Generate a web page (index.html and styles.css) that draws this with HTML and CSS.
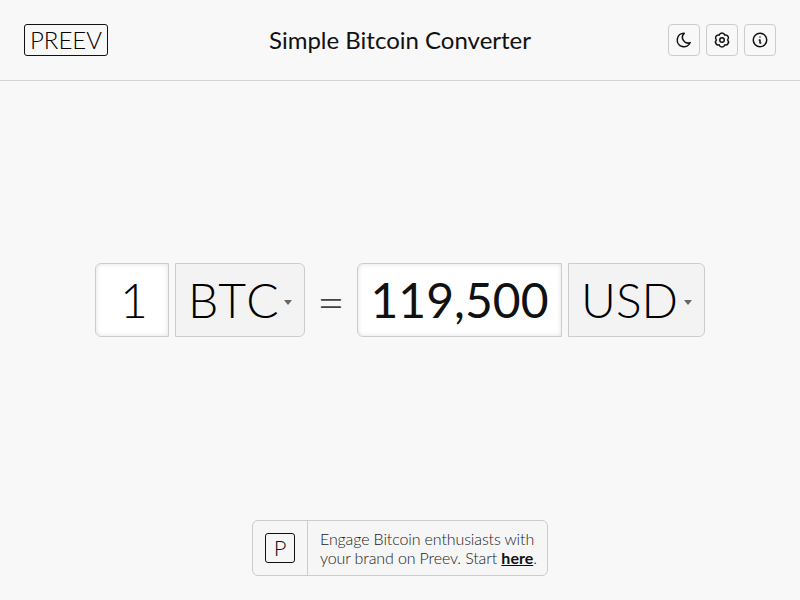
FILE: index.html
```html
<!DOCTYPE html>
<html lang="en">
<head>
    <meta charset="UTF-8">
    <meta name="viewport" content="width=device-width, initial-scale=1.0">
    <title>Simple Bitcoin Converter</title>
    <link rel="stylesheet" href="styles.css">
</head>
<body>

    <header class="header">
        <a class="logo">PREEV</a>
        <h1 class="title">Simple Bitcoin Converter</h1>
        <div class="tools">
            <button class="tool">
                <svg viewBox="0 0 24 24" width="18" height="18"><path d="M12 3c.132 0 .263 0 .393 0a7.5 7.5 0 0 0 7.92 12.446a9 9 0 1 1 -8.313 -12.454z"/></svg>
            </button>
            <button class="tool">
                <svg viewBox="0 0 24 24" width="18" height="18"><path d="M8.25 5.5A3.9 3.9 0 0 1 15.75 5.5A3.9 3.9 0 0 1 19.5 12A3.9 3.9 0 0 1 15.75 18.5A3.9 3.9 0 0 1 8.25 18.5A3.9 3.9 0 0 1 4.5 12A3.9 3.9 0 0 1 8.25 5.5z"/><circle cx="12" cy="12" r="3"/></svg>
            </button>
            <button class="tool">
                <svg viewBox="0 0 24 24" width="18" height="18"><circle cx="12" cy="12" r="9"/><path d="M12 8h.01"/><path d="M11 12h1v4h1"/></svg>
            </button>
        </div>
    </header>

    <main class="converter">
        <div class="box input-box amount-btc">1</div>
        <div class="box select-box select-btc">BTC<span class="caret"></span></div>
        <div class="equals">=</div>
        <div class="box input-box amount-usd">119,500</div>
        <div class="box select-box select-usd">USD<span class="caret"></span></div>
    </main>

    <footer class="footer">
        <div class="promo">
            <div class="promo-logo"><span class="promo-p">P</span></div>
            <p class="promo-text">Engage Bitcoin enthusiasts with<br>your brand on Preev. Start <a class="promo-link">here</a>.</p>
        </div>
    </footer>

</body>
</html>
```

FILE: styles.css
```css
html, body {
    height: 100%;
}

body {
    font-family: Lato, "Open Sans", sans-serif;
    margin: 0;
    background-color: #f8f8f8;
    color: #111;
    display: flex;
    flex-direction: column;
    height: 600px;
    overflow: hidden;
}

.header {
    height: 80px;
    border-bottom: 1px solid #d4d4d4;
    padding: 0 24px;
    display: grid;
    grid-template-columns: 1fr auto 1fr;
    align-items: center;
    flex-shrink: 0;
}

.logo {
    width: 84px;
    height: 32px;
    box-sizing: border-box;
    border: 1px solid #111;
    border-radius: 3px;
    font-size: 24px;
    font-weight: 300;
    line-height: 30px;
    text-align: center;
    color: #000;
}

.title {
    margin: 0 0 2px;
    font-size: 24px;
    font-weight: 400;
}

.tools {
    display: flex;
    gap: 6px;
    justify-self: end;
}

.tool {
    width: 32px;
    height: 32px;
    padding: 0;
    background: #f8f8f8;
    border: 1px solid #ccc;
    border-radius: 4px;
    display: flex;
    align-items: center;
    justify-content: center;
}

.tool svg {
    fill: none;
    stroke: #111;
    stroke-width: 2;
    stroke-linecap: round;
    stroke-linejoin: round;
}

.converter {
    flex: 1;
    display: flex;
    align-items: center;
    justify-content: center;
    padding-bottom: 1px;
}

.box {
    height: 74px;
    box-sizing: border-box;
    border: 1px solid #ccc;
    font-size: 48px;
    line-height: 72px;
    text-align: center;
    color: #000;
}

.input-box {
    background: #fff;
    border-radius: 6px 0 0 6px;
    box-shadow: inset 0 0 5px rgba(0, 0, 0, 0.12);
}

.select-box {
    background: #f3f3f3;
    border-radius: 0 6px 6px 0;
    font-weight: 300;
    font-kerning: none;
    display: flex;
    align-items: center;
    justify-content: space-between;
    padding: 0 12px;
}

.amount-btc {
    width: 74px;
    padding-left: 4px;
    font-weight: 300;
}

.amount-usd {
    width: 205px;
    font-weight: 400;
    color: #111;
}

.select-btc {
    width: 130px;
    margin-left: 6px;
}

.select-usd {
    width: 137px;
    margin-left: 6px;
}

.caret {
    margin-top: 4px;
    border-left: 4px solid transparent;
    border-right: 4px solid transparent;
    border-top: 5px solid #666;
}

.equals {
    width: 52px;
    text-align: center;
    font-size: 48px;
    font-weight: 300;
    color: #444;
}

.footer {
    display: flex;
    justify-content: center;
    padding-bottom: 24px;
}

.promo {
    width: 296px;
    height: 56px;
    box-sizing: border-box;
    border: 1px solid #ccc;
    border-radius: 6px;
    background: #f6f6f6;
    display: flex;
    align-items: stretch;
}

.promo-logo {
    width: 54px;
    border-right: 1px solid #ccc;
    display: flex;
    align-items: center;
    justify-content: center;
    flex-shrink: 0;
}

.promo-p {
    width: 30px;
    height: 30px;
    box-sizing: border-box;
    border: 1px solid #111;
    border-radius: 3px;
    font-size: 22px;
    font-weight: 300;
    line-height: 28px;
    text-align: center;
}

.promo-text {
    margin: 0;
    padding: 0 12px;
    align-self: center;
    font-size: 16px;
    font-weight: 300;
    letter-spacing: -0.12px;
    line-height: 19px;
    color: #222;
    white-space: nowrap;
}

.promo-link {
    color: #111;
    font-weight: 700;
    letter-spacing: 0;
    text-decoration: underline;
}
```
